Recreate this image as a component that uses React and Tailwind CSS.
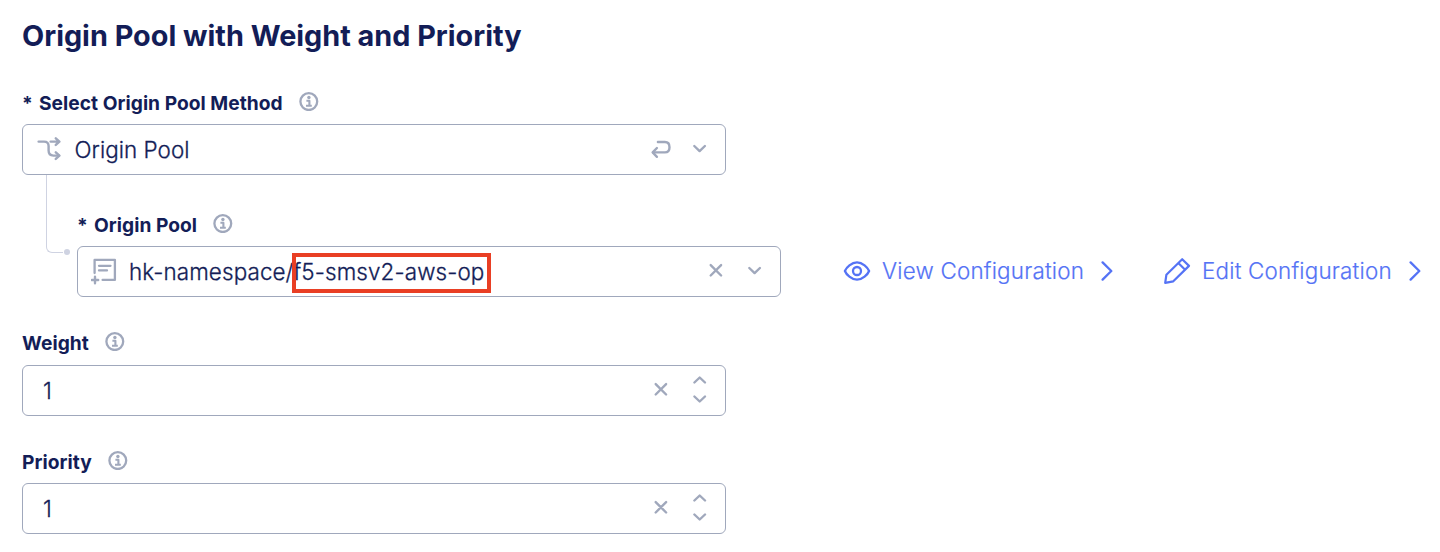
const stroke = { fill: 'none', stroke: 'currentColor', strokeLinecap: 'round', strokeLinejoin: 'round' }

function InfoIcon() {
  return (
    <svg className="block h-5 w-5 shrink-0 text-[#a0a8bc]" viewBox="0 0 20 20" {...stroke} strokeLinecap="butt">
      <circle cx="9.800" cy="10.600" r="8.400" strokeWidth="2.300" />
      <circle cx="9.900" cy="6.500" r="1.700" fill="currentColor" stroke="none" />
      <path d="M7.400 9.800h3v5M7 14.800h5.800" strokeWidth="2.100" />
    </svg>
  )
}

function RouteIcon() {
  return (
    <svg className="block h-[25px] w-[25px] shrink-0" viewBox="0 0 25 25" {...stroke} strokeWidth="2.400">
      <path d="M1.600 4.600H7C10.400 4.600 11.600 6.200 11.600 9V13.600C11.600 16.900 13.200 18.600 16.400 18.600H22" />
      <path d="M13.600 4.600H22M18.800 1.300L22.400 4.600L18.800 7.900M18.800 15.300L22.400 18.600L18.800 21.900" />
    </svg>
  )
}

function DocumentIcon() {
  return (
    <svg className="block h-[27px] w-[27px] shrink-0" viewBox="0 0 27 27" {...stroke} strokeWidth="2.300">
      <path d="M3.600 15V1.900H23.900V21.900H11.600" />
      <path d="M8 7.800H19.500M8 12.400H16" />
      <path d="M4 18.800V25.200M0.900 22H7.200" strokeWidth="2.400" />
    </svg>
  )
}

function ReturnIcon() {
  return (
    <svg className="block h-[25px] w-5 shrink-0" viewBox="0 0 20 25" {...stroke} strokeWidth="2.400">
      <path d="M6.900 5H13.900C17.200 5 18.500 7.200 18.500 10.200C18.500 13.400 17.200 15.400 13.900 15.400H2" />
      <path d="M5.900 11L1.700 15.400L5.900 19.800" />
    </svg>
  )
}

function ClearIcon() {
  return (
    <svg className="block h-[25px] w-5 shrink-0" viewBox="0 0 20 25" {...stroke} strokeWidth="2.400">
      <path d="M4.700 6.100L15.100 16.500M15.100 6.100L4.700 16.500" />
    </svg>
  )
}

function ChevronDown() {
  return (
    <svg className="block h-[25px] w-5 shrink-0" viewBox="0 0 20 25" {...stroke} strokeWidth="2.400">
      <path d="M4.300 9L9.600 14.100L14.900 9" />
    </svg>
  )
}

function Stepper() {
  return (
    <svg className="block h-[35px] w-5 shrink-0" viewBox="0 0 20 35" {...stroke} strokeWidth="2.400">
      <path d="M4.400 9.500L9.700 4.500L15 9.500M4.400 23.500L9.700 28.500L15 23.500" />
    </svg>
  )
}

function EyeIcon() {
  return (
    <svg className="block h-7 w-7 shrink-0" viewBox="0 0 28 28" {...stroke} strokeWidth="2.300">
      <path d="M1.900 14C3.200 10.600 8.600 5.300 14 5.300S24.800 10.600 26.100 14C24.800 17.400 19.400 22.700 14 22.700S3.200 17.400 1.900 14Z" />
      <circle cx="14" cy="14" r="4" />
    </svg>
  )
}

function PencilIcon() {
  return (
    <svg className="block h-7 w-7 shrink-0" viewBox="0 0 28 28" {...stroke} strokeWidth="2.200">
      <path d="M2.200 25.900L3.400 17.700L19.200 2.200L26 8.900L10.300 24.300ZM15.300 6L22.100 12.700" />
    </svg>
  )
}

function Label({ required, children }) {
  return (
    <div className="flex h-6 items-center text-[19.2px] font-bold leading-6 whitespace-pre">
      {required && <span className="w-[17px]">*</span>}
      <span className="mr-4 tracking-[0.03px]">{children}</span>
      <div className="-mt-[4px]">
        <InfoIcon />
      </div>
    </div>
  )
}

function Field({ children, className = '' }) {
  return (
    <div className={`flex h-[51px] w-[704px] items-center rounded-md border border-[#a0a8bc] bg-white text-[22.4px] font-light leading-7 [-webkit-text-stroke:0.3px_currentColor] ${className}`}>
      {children}
    </div>
  )
}

function Controls({ children }) {
  return <div className="ml-auto flex items-center gap-[19px] pr-[15px] text-[#a0a8bc]">{children}</div>
}

function ConfigLink({ icon, children }) {
  return (
    <a className="flex h-7 items-center text-[22.4px] font-light leading-7 tracking-[0.2px] whitespace-nowrap text-[#5573f5] [-webkit-text-stroke:0.2px_currentColor]">
      {icon}
      <span className="ml-[11px]">{children}</span>
      <svg className="ml-[17px] block h-7 w-3 shrink-0" viewBox="0 0 12 28" {...stroke} strokeWidth="2.300">
        <path d="M1.600 5.400L10.300 14L1.600 22.600" />
      </svg>
    </a>
  )
}

function NumberField({ label, value, className }) {
  return (
    <div>
      <Label>{label}</Label>
      <Field className={`pl-[20px] ${className}`}>
        <span className="mt-px">{value}</span>
        <Controls>
          <ClearIcon />
          <Stepper />
        </Controls>
      </Field>
    </div>
  )
}

export default function App() {
  return (
    <main className="h-[552px] w-[1440px] overflow-hidden bg-white pt-4 pl-[22px] font-['Inter','Liberation_Sans',sans-serif] text-[#131d57]">
      <h1 className="text-[28.8px] font-bold leading-10">Origin Pool with Weight and Priority</h1>
      <div className="mt-[35px]">
        <Label required>Select Origin Pool Method</Label>
        <Field className="mt-[9px] pl-[14px]">
          <span className="text-[#a0a8bc]"><RouteIcon /></span>
          <span className="ml-[12.500px] mt-px tracking-[0.06px]">Origin Pool</span>
          <Controls>
            <ReturnIcon />
            <ChevronDown />
          </Controls>
        </Field>
      </div>
      <div className="flex">
        <div className="flex h-[78px] w-[55px] items-end pl-6">
          <div className="h-[78px] w-[17px] rounded-bl-md border-b border-l border-[#cfd3e2]" />
          <div className="-mb-[2px] ml-[1px] h-[6px] w-[6px] rounded-full bg-[#cfd3e2]" />
        </div>
        <div className="pt-[38px]">
          <Label required>Origin Pool</Label>
          <div className="mt-[9px] flex items-center">
            <Field className="pl-[13px]">
              <span className="text-[#a0a8bc]"><DocumentIcon /></span>
              <span className="mt-px ml-[11px] tracking-[0.12px] whitespace-nowrap">
                hk-namespace/
                <span className="relative">
                  f5-smsv2-aws-op
                  <span className="absolute -top-[5px] -left-[2px] h-[40px] w-[199px] border-4 border-[#e93f24]" />
                </span>
              </span>
              <Controls>
                <ClearIcon />
                <ChevronDown />
              </Controls>
            </Field>
            <div className="mb-[2px] ml-[62px] flex gap-[50px]">
              <ConfigLink icon={<EyeIcon />}>View Configuration</ConfigLink>
              <ConfigLink icon={<PencilIcon />}>Edit Configuration</ConfigLink>
            </div>
          </div>
        </div>
      </div>
      <div className="mt-[34px] flex flex-col gap-[34px]">
        <NumberField label="Weight" value="1" className="mt-[10px]" />
        <NumberField label="Priority" value="1" className="mt-[9px]" />
      </div>
    </main>
  )
}
